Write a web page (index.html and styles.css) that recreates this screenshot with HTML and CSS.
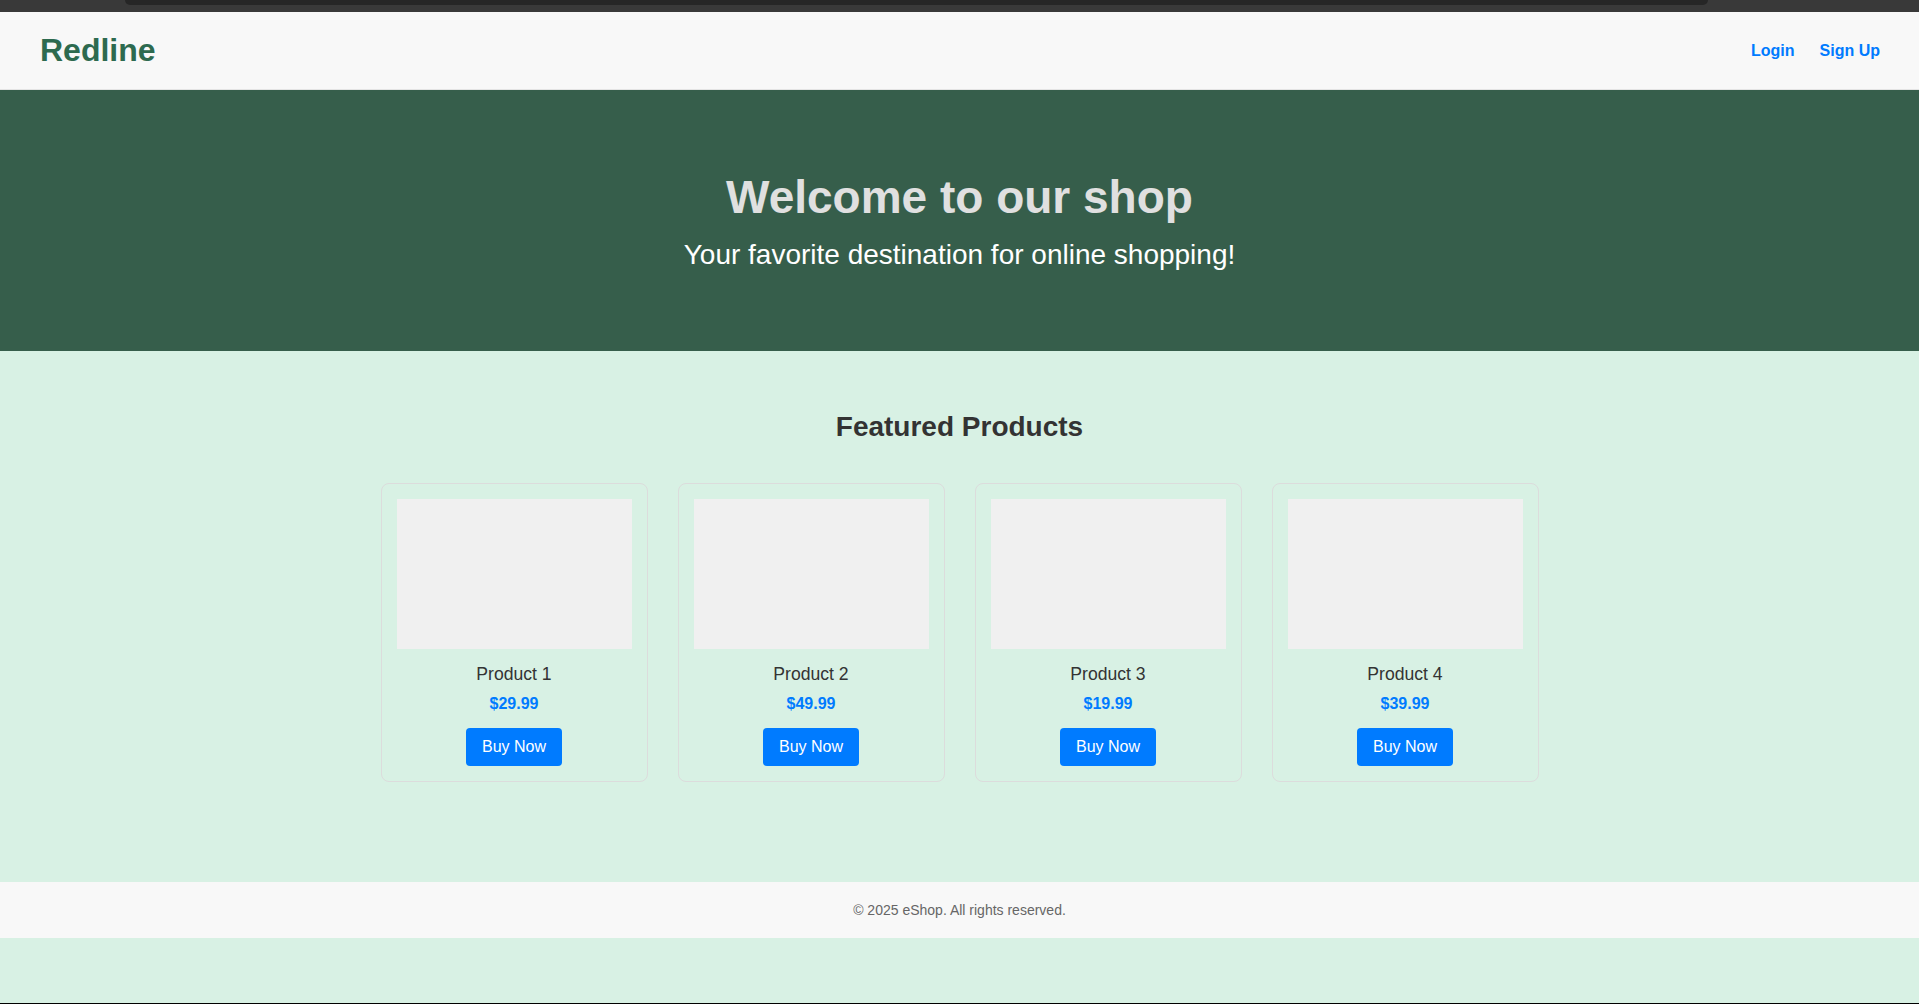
FILE: index.html
```html
<!DOCTYPE html>
<html lang="en">
<head>
<meta charset="utf-8">
<title>Redline</title>
<link rel="stylesheet" href="styles.css">
</head>
<body>
<div class="chrome"><div class="chrome-inner"></div></div>
<header class="site-header">
  <div class="logo">Redline</div>
  <nav class="nav">
    <a href="#" class="nav-link">Login</a>
    <a href="#" class="nav-link">Sign Up</a>
  </nav>
</header>
<section class="hero">
  <h1 class="hero-title">Welcome to our shop</h1>
  <p class="hero-sub">Your favorite destination for online shopping!</p>
</section>
<main class="products">
  <h2 class="products-title">Featured Products</h2>
  <div class="product-grid">
    <div class="card">
      <div class="card-img"></div>
      <h3 class="card-name">Product 1</h3>
      <p class="card-price">$29.99</p>
      <button class="btn">Buy Now</button>
    </div>
    <div class="card">
      <div class="card-img"></div>
      <h3 class="card-name">Product 2</h3>
      <p class="card-price">$49.99</p>
      <button class="btn">Buy Now</button>
    </div>
    <div class="card">
      <div class="card-img"></div>
      <h3 class="card-name">Product 3</h3>
      <p class="card-price">$19.99</p>
      <button class="btn">Buy Now</button>
    </div>
    <div class="card">
      <div class="card-img"></div>
      <h3 class="card-name">Product 4</h3>
      <p class="card-price">$39.99</p>
      <button class="btn">Buy Now</button>
    </div>
  </div>
</main>
<footer class="site-footer">
  <p class="footer-text">&copy; 2025 eShop. All rights reserved.</p>
</footer>
<div class="frame-bottom"></div>
</body>
</html>
```

FILE: styles.css
```css
* { box-sizing: border-box; }
html, body {
  margin: 0;
  padding: 0;
  background: #d8f1e4;
  font-family: "Liberation Sans", Arial, sans-serif;
}
.chrome {
  height: 12px;
  background: #393939;
  padding: 0 211px 0 125px;
}
.chrome-inner {
  height: 5px;
  background: #262626;
  border-radius: 0 0 8px 8px;
}
.site-header {
  display: flex;
  justify-content: space-between;
  align-items: center;
  background: #f8f8f8;
  padding: 20px 39px 20px 40px;
  border-bottom: 1px solid #e4e4e4;
}
.logo {
  font-size: 32px;
  font-weight: bold;
  color: #2d6a4f;
}
.nav {
  display: flex;
  gap: 25px;
}
.nav-link {
  color: #007bff;
  font-weight: bold;
  font-size: 16px;
  text-decoration: none;
}
.hero {
  background: #365e4b;
  text-align: center;
  padding: 80px 20px 80px;
}
.hero-title {
  margin: 0 0 15px;
  font-size: 46px;
  color: #e0e0e0;
}
.hero-sub {
  margin: 0;
  font-size: 28px;
  color: #ffffff;
}
.products {
  padding: 60px 20px 100px;
  text-align: center;
}
.products-title {
  margin: 0 0 40px;
  font-size: 28px;
  color: #333333;
}
.product-grid {
  display: flex;
  justify-content: center;
  gap: 30px;
}
.card {
  width: 267px;
  border: 1px solid #dcdcdc;
  border-radius: 8px;
  padding: 15px;
  display: flex;
  flex-direction: column;
  align-items: center;
}
.card-img {
  width: 100%;
  height: 150px;
  background: #f0f0f0;
}
.card-name {
  margin: 15px 0 0;
  font-size: 17.6px;
  font-weight: normal;
  color: #333333;
}
.card-price {
  margin: 10px 0 0;
  font-size: 16px;
  font-weight: bold;
  color: #007bff;
}
.btn {
  margin-top: 15px;
  background: #007bff;
  color: #ffffff;
  border: none;
  border-radius: 4px;
  padding: 10px 16px;
  font-family: "Liberation Sans", Arial, sans-serif;
  font-size: 16px;
  line-height: 18px;
}
.site-footer {
  background: #f8f8f8;
  padding: 20px;
  text-align: center;
}
.footer-text {
  margin: 0;
  font-size: 14px;
  color: #666666;
}
.frame-bottom {
  position: fixed;
  left: 0;
  right: 0;
  bottom: 0;
  height: 1px;
  background: #000000;
}
```
